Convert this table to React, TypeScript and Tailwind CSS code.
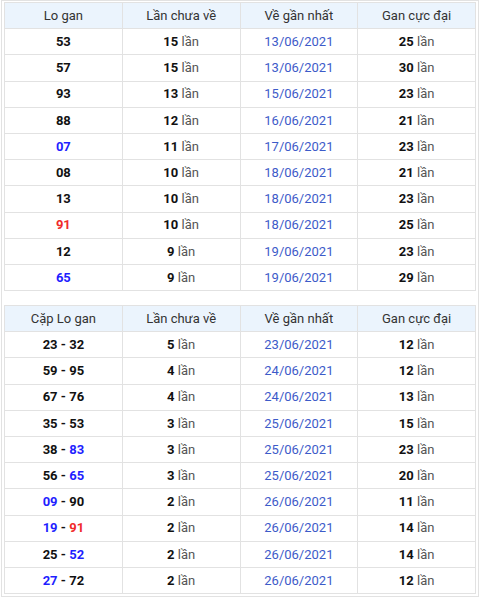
import React from 'react';

type Num = { v: string; c?: 'blue' | 'red' };
type Row = { nums: Num[]; times: number; date: string; max: number };

const firstRows: Row[] = [
  { nums: [{ v: '53' }], times: 15, date: '13/06/2021', max: 25 },
  { nums: [{ v: '57' }], times: 15, date: '13/06/2021', max: 30 },
  { nums: [{ v: '93' }], times: 13, date: '15/06/2021', max: 23 },
  { nums: [{ v: '88' }], times: 12, date: '16/06/2021', max: 21 },
  { nums: [{ v: '07', c: 'blue' }], times: 11, date: '17/06/2021', max: 23 },
  { nums: [{ v: '08' }], times: 10, date: '18/06/2021', max: 21 },
  { nums: [{ v: '13' }], times: 10, date: '18/06/2021', max: 23 },
  { nums: [{ v: '91', c: 'red' }], times: 10, date: '18/06/2021', max: 25 },
  { nums: [{ v: '12' }], times: 9, date: '19/06/2021', max: 23 },
  { nums: [{ v: '65', c: 'blue' }], times: 9, date: '19/06/2021', max: 29 },
];

const pairRows: Row[] = [
  { nums: [{ v: '23' }, { v: '32' }], times: 5, date: '23/06/2021', max: 12 },
  { nums: [{ v: '59' }, { v: '95' }], times: 4, date: '24/06/2021', max: 12 },
  { nums: [{ v: '67' }, { v: '76' }], times: 4, date: '24/06/2021', max: 13 },
  { nums: [{ v: '35' }, { v: '53' }], times: 3, date: '25/06/2021', max: 15 },
  { nums: [{ v: '38' }, { v: '83', c: 'blue' }], times: 3, date: '25/06/2021', max: 23 },
  { nums: [{ v: '56' }, { v: '65', c: 'blue' }], times: 3, date: '25/06/2021', max: 20 },
  { nums: [{ v: '09', c: 'blue' }, { v: '90' }], times: 2, date: '26/06/2021', max: 11 },
  { nums: [{ v: '19', c: 'blue' }, { v: '91', c: 'red' }], times: 2, date: '26/06/2021', max: 14 },
  { nums: [{ v: '25' }, { v: '52', c: 'blue' }], times: 2, date: '26/06/2021', max: 14 },
  { nums: [{ v: '27', c: 'blue' }, { v: '72' }], times: 2, date: '26/06/2021', max: 12 },
];

const numColor = (c?: 'blue' | 'red') =>
  c === 'blue' ? 'text-[#1f1fff]' : c === 'red' ? 'text-[#f02a2a]' : 'text-[#111]';

const Times = ({ n }: { n: number }) => (
  <>
    <b className="font-bold text-[#111]">{n}</b> <span className="text-[#555]">lần</span>
  </>
);

const GanTable = ({ title, rows }: { title: string; rows: Row[] }) => (
  <table className="w-full table-fixed border-collapse text-center text-[13px]">
    <thead>
      <tr className="bg-[#ebf4fd]">
        {[title, 'Lần chưa về', 'Về gần nhất', 'Gan cực đại'].map(h => (
          <th key={h} className="h-[26.2px] border border-[#e2e2e2] font-normal text-[#333]">
            {h}
          </th>
        ))}
      </tr>
    </thead>
    <tbody>
      {rows.map((r, i) => (
        <tr key={i}>
          <td className="h-[26.2px] border border-[#e2e2e2] font-bold">
            {r.nums.map((n, j) => (
              <React.Fragment key={j}>
                {j > 0 && <span className="text-[#111]"> - </span>}
                <span className={numColor(n.c)}>{n.v}</span>
              </React.Fragment>
            ))}
          </td>
          <td className="border border-[#e2e2e2]">
            <Times n={r.times} />
          </td>
          <td className="border border-[#e2e2e2] text-[#3d5bc9]">{r.date}</td>
          <td className="border border-[#e2e2e2]">
            <Times n={r.max} />
          </td>
        </tr>
      ))}
    </tbody>
  </table>
);

export default function App() {
  return (
    <div className="w-[480px] bg-white font-['Roboto',sans-serif]">
      <div className="ml-px w-[478px] border border-[#e2e2e2] px-[2px] pt-px pb-[2px]">
        <GanTable title="Lo gan" rows={firstRows} />
        <div className="h-[14px]" />
        <GanTable title="Cặp Lo gan" rows={pairRows} />
      </div>
    </div>
  );
}
